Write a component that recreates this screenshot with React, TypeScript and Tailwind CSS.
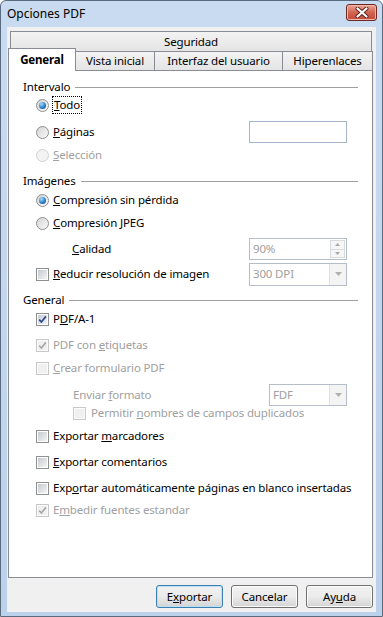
import React from "react";

function Radio({ checked = false, disabled = false }: { checked?: boolean; disabled?: boolean }) {
  return (
    <span
      className={`flex h-[13px] w-[13px] shrink-0 items-center justify-center rounded-full border ${
        disabled
          ? "border-[#d0d0d0] bg-[#f3f3f3]"
          : "border-[#8e8f8f] bg-linear-to-br from-[#d4d4d4] to-[#fafafa]"
      }`}
    >
      {checked && (
        <span className="h-[7px] w-[7px] rounded-full bg-[radial-gradient(circle_at_35%_30%,#a8dcff,#2a80c8_55%,#0d4680)]" />
      )}
    </span>
  );
}

function Check({ checked = false, disabled = false }: { checked?: boolean; disabled?: boolean }) {
  return (
    <span
      className={`flex h-[13px] w-[13px] shrink-0 items-center justify-center border ${
        disabled ? "border-[#c8c8c8] bg-[#fbfbfb]" : "border-[#8e8f8f] bg-white"
      }`}
    >
      <span
        className={`flex h-[9px] w-[9px] items-center justify-center ${
          disabled ? "bg-[#f0f0f0]" : "bg-linear-to-br from-[#c6cad0] to-[#f4f4f4]"
        }`}
      >
        {checked && (
          <svg width="9" height="9" viewBox="0 0 9 9">
            <path
              d="M1.2 4.6 L3.4 7 L7.9 1.4"
              fill="none"
              stroke={disabled ? "#a8a8a8" : "#2b4a8a"}
              strokeWidth="1.7"
            />
          </svg>
        )}
      </span>
    </span>
  );
}

function Header({ title }: { title: string }) {
  return (
    <div className="flex h-[16px] items-center pl-[14px] pr-[14px]">
      <span>{title}</span>
      <span className="ml-[5px] h-px flex-1 bg-[#a0a0a0]" />
    </div>
  );
}

function DropBtn() {
  return (
    <span className="flex h-full w-[17px] items-center justify-center border-l border-[#dde0e4] bg-[#f4f4f4]">
      <svg width="7" height="4" viewBox="0 0 7 4">
        <path d="M0 0 L7 0 L3.5 4 Z" fill="#b0b0b0" />
      </svg>
    </span>
  );
}

function Btn({ children, def = false }: { children: React.ReactNode; def?: boolean }) {
  return (
    <button
      className={`flex h-[23px] w-[67px] items-center justify-center rounded-[3px] border bg-linear-to-b from-[#f2f2f2] via-[#ebebeb] to-[#d4d4d4] ${
        def ? "border-[#3c7fb1] shadow-[inset_0_0_0_1px_#b8e1f7]" : "border-[#707070] shadow-[inset_0_0_0_1px_#fcfcfc]"
      }`}
    >
      {children}
    </button>
  );
}

export default function App() {
  return (
    <div className="h-[617px] w-[383px] overflow-hidden bg-white font-['Segoe_UI','Noto_Sans',sans-serif] text-[11.5px] leading-none tracking-[-0.15px] whitespace-nowrap text-black">
      <div className="flex h-full w-full flex-col rounded-t-[6px] border border-[#5a6b80] bg-linear-to-b from-[#c9dbf0] to-[#bcd1ea]">
        {/* Title bar */}
        <div className="flex h-[26px] shrink-0 items-center justify-between pl-[6px] pr-[5px]">
          <span className="pb-[1px] text-[12px] tracking-normal">Opciones PDF</span>
          <span className="mt-[-4px] flex h-[17px] w-[31px] items-center justify-center rounded-[3px] border border-[#6e2a22] bg-linear-to-b from-[#e9a899] via-[#d26452] to-[#c24a3a] shadow-[inset_0_0_0_1px_#f0b6a8]">
            <svg width="14" height="11" viewBox="0 0 14 11">
              <path d="M2.5 1.5 L11.5 9.5 M11.5 1.5 L2.5 9.5" stroke="#5b1f17" strokeWidth="4" strokeLinecap="round" />
              <path d="M2.5 1.5 L11.5 9.5 M11.5 1.5 L2.5 9.5" stroke="#ffffff" strokeWidth="2.2" strokeLinecap="round" />
            </svg>
          </span>
        </div>

        {/* Client */}
        <div className="mx-[6px] mb-[4px] flex flex-1 flex-col bg-[#f0f0f0]">
          {/* Tab rows */}
          <div className="ml-[3px] mt-[4px] flex h-[20px] w-[362px] items-center justify-center border border-b-0 border-[#898c95] bg-linear-to-b from-[#f3f3f3] to-[#e4e4e4]">
            Seguridad
          </div>
          <div className="flex h-[19px] items-start">
            <div className="relative z-10 ml-[1px] mt-[-3px] flex h-[23px] w-[68px] items-center justify-center border border-b-0 border-[#898c95] bg-white pb-[1px] font-bold">
              General
            </div>
            <div className="flex h-[19px] w-[79px] items-center justify-center border border-b-0 border-l-0 border-[#898c95] bg-linear-to-b from-[#f3f3f3] to-[#e4e4e4]">
              Vista inicial
            </div>
            <div className="flex h-[19px] w-[128px] items-center justify-center border border-b-0 border-l-0 border-[#898c95] bg-linear-to-b from-[#f3f3f3] to-[#e4e4e4]">
              Interfaz del usuario
            </div>
            <div className="flex h-[19px] w-[90px] items-center justify-center border border-b-0 border-l-0 border-[#898c95] bg-linear-to-b from-[#f3f3f3] to-[#e4e4e4]">
              Hiperenlaces
            </div>
          </div>

          {/* Panel */}
          <div className="ml-[1px] flex h-[508px] w-[365px] flex-col border border-[#898c95] bg-white">
            <div className="mt-[8px]">
              <Header title="Intervalo" />
            </div>
            <div className="mt-[2px] flex h-[16px] items-center gap-[4px] pl-[27px]">
              <Radio checked />
              <span className="outline-1 outline-dotted outline-[#000] px-[1px] py-[2px]">
                <u>T</u>odo
              </span>
            </div>
            <div className="mt-[11px] flex h-[16px] items-center gap-[4px] pl-[27px] pr-[25px]">
              <Radio />
              <span>
                <u>P</u>áginas
              </span>
              <span className="ml-auto h-[22px] w-[98px] border border-[#a7b6cc] bg-white" />
            </div>
            <div className="mt-[7px] flex h-[16px] items-center gap-[4px] pl-[27px] text-[#a0a0a0]">
              <Radio disabled />
              <span>
                <u>S</u>elección
              </span>
            </div>

            <div className="mt-[10px]">
              <Header title="Imágenes" />
            </div>
            <div className="mt-[3px] flex h-[16px] items-center gap-[4px] pl-[27px]">
              <Radio checked />
              <span>
                <u>C</u>ompresión sin pérdida
              </span>
            </div>
            <div className="mt-[7px] flex h-[16px] items-center gap-[4px] pl-[27px]">
              <Radio />
              <span>
                <u>C</u>ompresión JPEG
              </span>
            </div>
            <div className="mt-[10px] flex h-[16px] items-center pl-[63px] pr-[25px]">
              <span>
                <u>C</u>alidad
              </span>
              <span className="ml-auto flex h-[22px] w-[98px] items-center border border-[#b5bdc9] bg-white pl-[3px] text-[#a0a0a0]">
                <span className="flex-1">90%</span>
                <span className="mr-[1px] flex h-[18px] w-[15px] flex-col border border-[#d8dbe0]">
                  <span className="flex flex-1 items-center justify-center border-b border-[#d8dbe0] bg-[#f6f6f6]">
                    <svg width="5" height="3" viewBox="0 0 5 3">
                      <path d="M0 3 L5 3 L2.5 0 Z" fill="#a8a8a8" />
                    </svg>
                  </span>
                  <span className="flex flex-1 items-center justify-center bg-[#f6f6f6]">
                    <svg width="5" height="3" viewBox="0 0 5 3">
                      <path d="M0 0 L5 0 L2.5 3 Z" fill="#a8a8a8" />
                    </svg>
                  </span>
                </span>
              </span>
            </div>
            <div className="mt-[9px] flex h-[16px] items-center gap-[4px] pl-[27px] pr-[25px]">
              <Check />
              <span>
                <u>R</u>educir resolución de imagen
              </span>
              <span className="ml-auto flex h-[23px] w-[98px] items-center border border-[#b5bdc9] bg-white pl-[3px] text-[#a0a0a0]">
                <span className="flex-1">300 DPI</span>
                <DropBtn />
              </span>
            </div>

            <div className="mt-[10px]">
              <Header title="General" />
            </div>
            <div className="mt-[3px] flex h-[16px] items-center gap-[4px] pl-[27px]">
              <Check checked />
              <span>
                P<u>D</u>F/A-1
              </span>
            </div>
            <div className="mt-[10px] flex h-[16px] items-center gap-[4px] pl-[27px] text-[#a0a0a0]">
              <Check checked disabled />
              <span>
                PDF con <u>e</u>tiquetas
              </span>
            </div>
            <div className="mt-[7px] flex h-[16px] items-center gap-[4px] pl-[27px] text-[#a0a0a0]">
              <Check disabled />
              <span>
                <u>C</u>rear formulario PDF
              </span>
            </div>
            <div className="mt-[11px] flex h-[16px] items-center pl-[64px] pr-[25px] text-[#a0a0a0]">
              <span>
                Enviar <u>f</u>ormato
              </span>
              <span className="ml-auto flex h-[22px] w-[78px] items-center border border-[#b5bdc9] bg-white pl-[3px]">
                <span className="flex-1">FDF</span>
                <DropBtn />
              </span>
            </div>
            <div className="mt-[2px] flex h-[16px] items-center gap-[5px] pl-[64px] text-[#a0a0a0]">
              <Check disabled />
              <span>
                Permitir <u>n</u>ombres de campos duplicados
              </span>
            </div>
            <div className="mt-[7px] flex h-[16px] items-center gap-[4px] pl-[27px]">
              <Check />
              <span>
                Exportar <u>m</u>arcadores
              </span>
            </div>
            <div className="mt-[10px] flex h-[16px] items-center gap-[4px] pl-[27px]">
              <Check />
              <span>
                <u>E</u>xportar comentarios
              </span>
            </div>
            <div className="mt-[10px] flex h-[16px] items-center gap-[4px] pl-[27px]">
              <Check />
              <span>
                Exp<u>o</u>rtar automáticamente páginas en blanco insertadas
              </span>
            </div>
            <div className="mt-[6px] flex h-[16px] items-center gap-[4px] pl-[27px] text-[#a0a0a0]">
              <Check checked disabled />
              <span>
                E<u>m</u>bedir fuentes estandar
              </span>
            </div>
          </div>

          {/* Buttons */}
          <div className="mt-[7px] flex justify-end gap-[8px] pr-[3px]">
            <Btn def>
              <span>
                E<u>x</u>portar
              </span>
            </Btn>
            <Btn>Cancelar</Btn>
            <Btn>
              <span>
                Ay<u>u</u>da
              </span>
            </Btn>
          </div>
        </div>
      </div>
    </div>
  );
}
